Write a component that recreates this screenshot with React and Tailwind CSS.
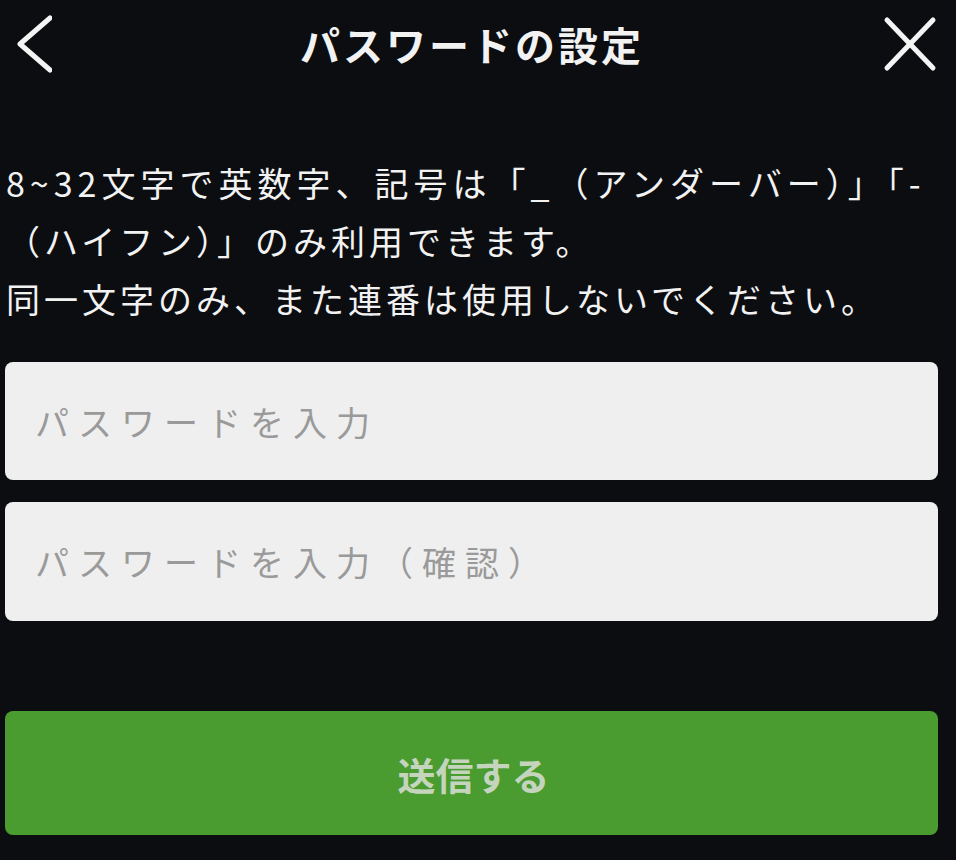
import React from "react";

export default function App() {
  return (
    <div className="w-[956px] h-[860px] overflow-hidden bg-[#0b0d10] text-[#f2f2f2] font-['Noto_Sans_CJK_JP','Noto_Sans',sans-serif]">
      <header className="h-[88px] flex items-center pl-[12px] pr-[18px]">
        <svg width="40" height="60" viewBox="0 0 40 60" fill="none">
          <polyline points="38,4 8,30 38,56" stroke="#f4f4f4" strokeWidth="5" strokeLinecap="round" strokeLinejoin="round" />
        </svg>
        <h1 className="flex-1 text-center pl-[10px] text-[40px] font-semibold tracking-[3px] leading-none">パスワードの設定</h1>
        <svg width="56" height="58" viewBox="0 0 56 58" fill="none">
          <line x1="5" y1="5" x2="51" y2="53" stroke="#f4f4f4" strokeWidth="5" strokeLinecap="round" />
          <line x1="51" y1="5" x2="5" y2="53" stroke="#f4f4f4" strokeWidth="5" strokeLinecap="round" />
        </svg>
      </header>

      <p className="mt-[66px] pl-[6px] text-[34px] leading-[58px] tracking-[4px] whitespace-nowrap">
        <span className="tracking-[5px]">8~32文字で英数字、記号は「_（アンダーバー）」「-</span>
        <br />
        （ハイフン）」のみ利用できます。
        <br />
        同一文字のみ、また連番は使用しないでください。
      </p>

      <div className="mt-[34px] ml-[5px] w-[933px] flex flex-col gap-[22px]">
        <input
          type="password"
          placeholder="パスワードを入力"
          className="h-[118px] w-full rounded-[8px] bg-[#efefef] px-[30px] text-[34px] tracking-[9px] text-[#333] placeholder:text-[#9a9a9a] outline-none"
        />
        <input
          type="password"
          placeholder="パスワードを入力（確認）"
          className="h-[119px] w-full rounded-[8px] bg-[#efefef] px-[30px] text-[34px] tracking-[9px] text-[#333] placeholder:text-[#9a9a9a] outline-none"
        />
      </div>

      <button className="mt-[90px] ml-[5px] w-[933px] h-[124px] rounded-[8px] bg-[#4a9b30] flex items-center justify-center text-[38px] font-bold text-[#c4d4bd] pl-[4px]">
        送信する
      </button>
    </div>
  );
}
